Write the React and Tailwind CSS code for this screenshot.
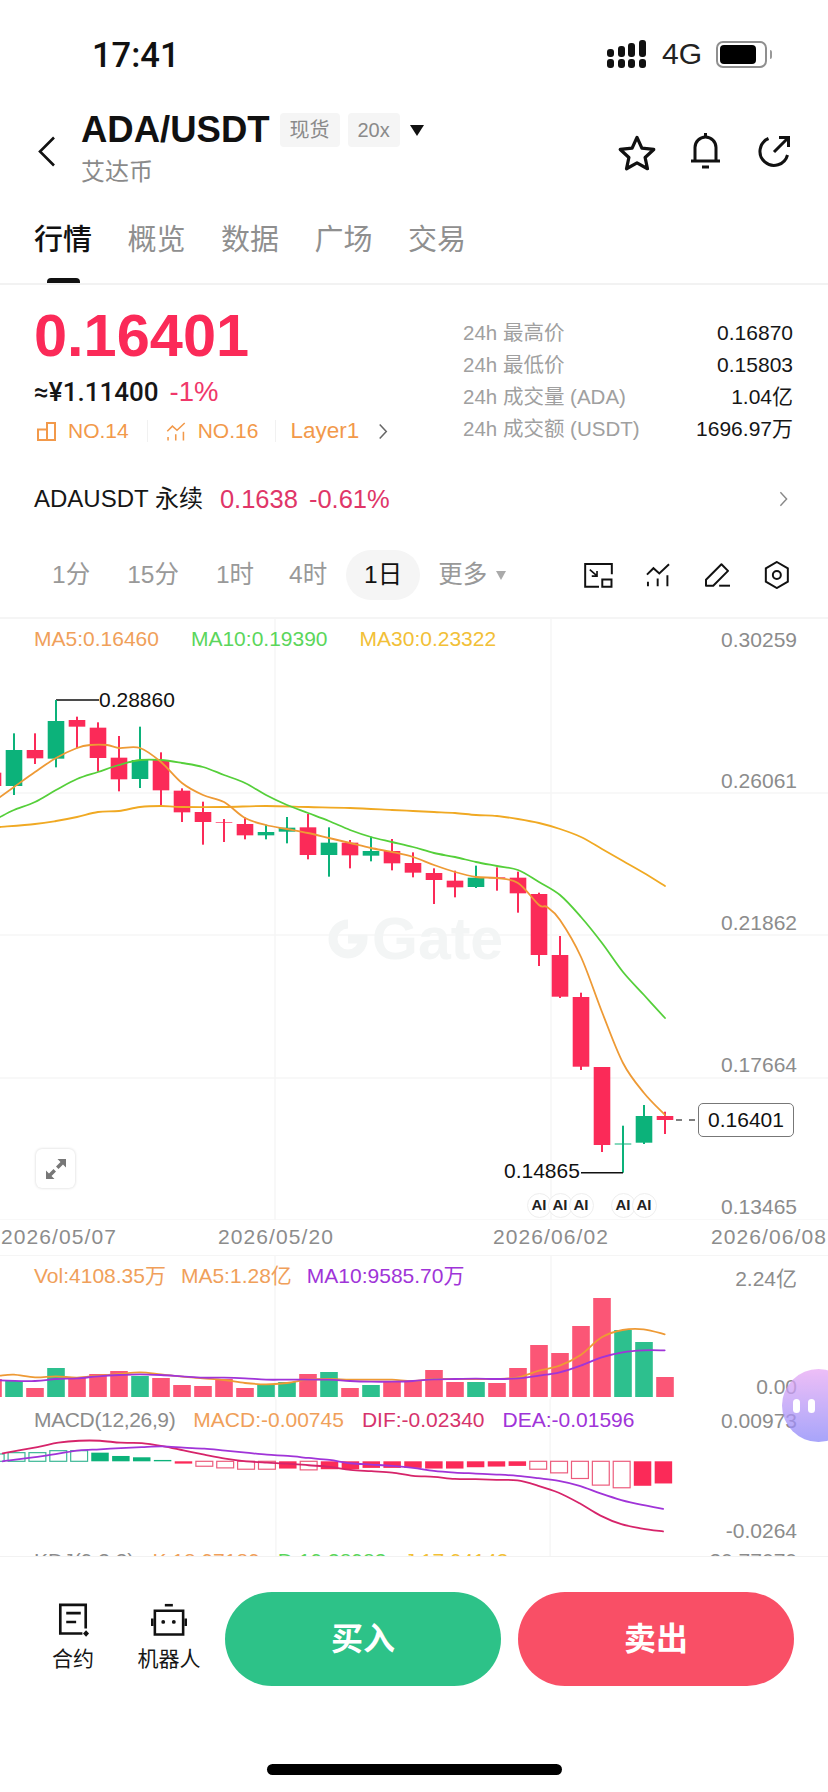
import React from 'react';

const RED = '#fb2a58';
const GREEN = '#0cb27a';
const VOL_RED = '#fb5676';
const VOL_GREEN = '#2dc08e';

// y values read off the chart, in page pixels
const z = (v) => 620 + v / 3;
const candles = [
  [-7, z(430), z(458), z(498), z(510), RED],
  [14, z(340), z(390), z(498), z(525), GREEN],
  [35, z(340), z(390), z(415), z(432), RED],
  [56, z(240), z(303), z(416), z(442), GREEN],
  [77, z(290), z(300), z(320), z(385), RED],
  [98, z(307), z(323), z(414), z(455), RED],
  [119, z(348), z(413), z(478), z(514), RED],
  [140, z(320), z(420), z(477), z(504), GREEN],
  [161, z(397), z(420), z(511), z(558), RED],
  [182, z(505), z(512), z(577), z(606), RED],
  [203, z(545), z(576), z(606), z(674), RED],
  [224, z(597), z(607), z(609), z(666), RED],
  [245, z(592), z(612), z(646), z(658), RED],
  [266, z(614), z(636), z(646), z(658), GREEN],
  [287, z(591), z(623), z(635), z(670), GREEN],
  [308, z(582), z(622), z(705), z(718), RED],
  [329, z(622), z(668), z(705), z(770), GREEN],
  [350, z(660), z(668), z(706), z(745), RED],
  [371, z(650), z(693), z(707), z(724), GREEN],
  [392, z(657), z(693), z(730), z(751), RED],
  [413, z(697), z(729), z(758), z(772), RED],
  [434, z(745), z(759), z(780), z(852), RED],
  [455, z(752), z(782), z(802), z(832), RED],
  [476, z(737), z(773), z(801), z(804), GREEN],
  [497, z(742), z(772), z(775), z(812), RED],
  [518, z(755), z(773), z(820), z(878), RED],
  [539, 892.7, 894, 955, 966, RED],
  [560, 936, 955, 996.7, 998, RED],
  [581, 992.7, 997, 1066.7, 1070, RED],
  [602, 1067, 1067, 1145, 1152, RED],
  [623, 1125.7, 1143.5, 1144.5, 1172.7, GREEN],
  [644, 1105, 1116, 1142.7, 1144, GREEN],
  [665, 1111.7, 1116, 1120, 1134, RED],
];

const ma5 = [[0, 797], [14, 787], [35, 772], [56, 758], [77, 748], [90, 745], [107, 745], [119, 748], [140, 748], [161, 762], [182, 783], [203, 795], [224, 802], [245, 818], [266, 825], [287, 829], [308, 833], [329, 838], [350, 843], [371, 848], [392, 852], [413, 857], [434, 865], [455, 872], [476, 877], [497, 878], [518, 883], [539, 905], [547, 907], [560, 920], [581, 957], [602, 1012], [623, 1063], [644, 1093], [665, 1115]];
const ma10 = [[0, 817], [14, 810], [35, 802], [56, 790], [77, 779], [98, 772], [119, 765], [140, 760], [161, 760], [182, 763], [203, 767], [224, 775], [245, 783], [266, 795], [287, 805], [308, 813], [329, 821], [350, 830], [371, 837], [392, 842], [413, 847], [434, 853], [455, 857], [476, 862], [497, 866], [518, 870], [539, 882], [560, 895], [581, 917], [602, 943], [623, 972], [644, 995], [665, 1018]];
const ma30 = [[0, 827], [35, 824], [56, 821], [77, 817], [98, 812], [119, 811], [140, 807], [161, 806], [182, 807], [224, 807], [266, 806], [308, 807], [350, 808], [392, 810], [413, 811], [434, 812], [455, 813], [476, 815], [497, 816], [518, 819], [539, 823], [560, 829], [581, 837], [602, 849], [623, 861], [644, 873], [665, 886]];

const volBars = [
  [-7, 1380, VOL_RED], [14, 1382, VOL_GREEN], [35, 1389, VOL_RED], [56, 1369, VOL_GREEN], [77, 1379, VOL_RED],
  [98, 1375, VOL_RED], [119, 1372, VOL_RED], [140, 1377, VOL_GREEN], [161, 1379, VOL_RED], [182, 1386, VOL_RED],
  [203, 1387, VOL_RED], [224, 1380, VOL_RED], [245, 1389, VOL_RED], [266, 1386, VOL_GREEN], [287, 1383, VOL_GREEN],
  [308, 1375, VOL_RED], [329, 1373, VOL_GREEN], [350, 1389, VOL_RED], [371, 1386, VOL_GREEN], [392, 1382, VOL_RED],
  [413, 1382, VOL_RED], [434, 1371, VOL_RED], [455, 1383, VOL_RED], [476, 1383, VOL_GREEN], [497, 1384, VOL_RED],
  [518, 1369, VOL_RED], [539, 1346, VOL_RED], [560, 1354, VOL_RED], [581, 1327, VOL_RED], [602, 1299, VOL_RED],
  [623, 1331, VOL_GREEN], [644, 1343, VOL_GREEN], [665, 1378, VOL_RED],
];

const left = (pts) => pts.map(([x, y]) => [x / 3, 1100 + y / 3]);
const right = (pts) => pts.map(([x, y]) => [414 + x / 3, 1230 + y / 3]);

const volMa5 = [...left([[0, 830], [42, 827], [105, 835], [168, 832], [231, 836], [294, 830], [357, 825], [420, 820], [483, 826], [546, 833], [609, 838], [672, 843], [735, 852], [798, 856], [861, 852], [924, 842], [987, 840], [1050, 842], [1113, 842], [1176, 842], [1239, 846]]), ...right([[60, 450], [123, 450], [186, 450], [249, 450], [312, 445], [375, 425], [437, 410], [500, 378], [563, 325], [626, 303], [689, 301], [752, 316]])];
const volMa10 = [...left([[0, 844], [105, 846], [168, 840], [231, 838], [294, 832], [357, 828], [420, 826], [483, 828], [546, 832], [609, 836], [672, 836], [735, 838], [798, 842], [861, 842], [924, 842], [987, 842], [1050, 846], [1113, 848], [1176, 848], [1239, 846]]), ...right([[60, 451], [123, 450], [186, 449], [249, 450], [312, 448], [375, 440], [437, 430], [500, 410], [563, 385], [626, 370], [689, 364], [752, 364]])];
const dif = [...left([[0, 1064], [105, 1045], [168, 1032], [231, 1026], [294, 1026], [357, 1032], [420, 1033], [483, 1042], [546, 1055], [609, 1068], [672, 1080], [735, 1088], [798, 1092], [861, 1095], [924, 1100], [987, 1105], [1050, 1114], [1113, 1118], [1176, 1122], [1239, 1132]]), ...right([[60, 745], [123, 751], [186, 752], [249, 754], [312, 756], [375, 772], [437, 793], [500, 825], [563, 862], [626, 888], [689, 901], [752, 910]])];
const dea = [...left([[0, 1088], [105, 1075], [168, 1065], [231, 1055], [294, 1052], [357, 1048], [420, 1045], [483, 1043], [546, 1047], [609, 1050], [672, 1056], [735, 1062], [798, 1068], [861, 1072], [924, 1078], [987, 1084], [1050, 1094], [1113, 1098], [1176, 1102], [1239, 1108]]), ...right([[60, 727], [123, 732], [186, 735], [249, 738], [312, 742], [375, 749], [437, 757], [500, 772], [563, 795], [626, 815], [689, 830], [752, 842]])];

// [x, end y, hollow]
const MACD_BASE = 1462.7;
const macdBars = [
  [-7, 1100 + 1066 / 3, true], [14, 1100 + 1062 / 3, true], [35, 1100 + 1062 / 3, true], [56, 1100 + 1056 / 3, true], [77, 1100 + 1056 / 3, true],
  [98, 1100 + 1062 / 3, false], [119, 1100 + 1072 / 3, false], [140, 1100 + 1076 / 3, false], [161, 1100 + 1084 / 3, false],
  [182, 1465, false], [203, 1100 + 1103 / 3, true], [224, 1100 + 1108 / 3, true], [245, 1100 + 1112 / 3, true], [266, 1100 + 1112 / 3, true],
  [287, 1100 + 1110 / 3, false], [308, 1100 + 1114 / 3, true], [329, 1100 + 1112 / 3, false], [350, 1100 + 1112 / 3, false],
  [371, 1100 + 1108 / 3, false], [392, 1100 + 1108 / 3, false], [413, 1100 + 1108 / 3, false],
  [434, 1230 + 720 / 3, false], [455, 1230 + 720 / 3, false], [476, 1230 + 716 / 3, false], [497, 1230 + 714 / 3, false], [518, 1230 + 712 / 3, false],
  [539, 1230 + 722 / 3, true], [560, 1230 + 733 / 3, true], [581, 1230 + 750 / 3, true], [602, 1230 + 770 / 3, true], [623, 1230 + 778 / 3, true],
  [644, 1230 + 772 / 3, false], [665, 1230 + 765 / 3, false],
];

// catmull-rom through the points, so the averages read as curves
const smooth = (pts) => {
  let d = `M${pts[0][0]} ${pts[0][1]}`;
  for (let i = 0; i < pts.length - 1; i++) {
    const p0 = pts[i - 1] || pts[i];
    const p1 = pts[i];
    const p2 = pts[i + 1];
    const p3 = pts[i + 2] || p2;
    const c1x = p1[0] + (p2[0] - p0[0]) / 6;
    const c1y = p1[1] + (p2[1] - p0[1]) / 6;
    const c2x = p2[0] - (p3[0] - p1[0]) / 6;
    const c2y = p2[1] - (p3[1] - p1[1]) / 6;
    d += `C${c1x} ${c1y} ${c2x} ${c2y} ${p2[0]} ${p2[1]}`;
  }
  return d;
};

const Line = ({ pts, color }) => (
  <path d={smooth(pts)} fill="none" stroke={color} strokeWidth="1.8" strokeLinecap="round" />
);

const Chevron = ({ className, color = '#777' }) => (
  <svg className={className} viewBox="0 0 10 18" fill="none" stroke={color} strokeWidth="1.6">
    <path d="M1.5 1.5 8.5 9 1.5 16.5" />
  </svg>
);

const TrendIcon = ({ className, color, width = 6 }) => (
  <svg className={className} viewBox="225 36 78 74" fill="none" stroke={color} strokeWidth={width}>
    <path d="M230 72 250 52 268 68 298 40" />
    <path d="M233 94V108M263 84V108M293 74V108" />
  </svg>
);

const AxisLabel = ({ y, children }) => (
  <span className="absolute right-[31px] -translate-y-1/2 text-[21px] leading-none text-[#8c8c8c]" style={{ top: y }}>
    {children}
  </span>
);

const StatRow = ({ label, value }) => (
  <div className="flex h-[32px] items-center justify-between">
    <span className="text-[20.5px] text-[#a0a0a0]">{label}</span>
    <span className="text-[21px] text-[#161616]">{value}</span>
  </div>
);

const App = () => {
  return (
    <div className="w-[828px] h-[1792px] overflow-hidden bg-white font-['Liberation_Sans','Noto_Sans_CJK_SC',sans-serif]">
      {/* status bar */}
      <div className="flex h-[92px] items-start justify-between pl-[92px] pr-[56px] pt-[36px]">
        <span className="font-['Roboto'] text-[34.5px] leading-[38px] font-medium text-[#111]">17:41</span>
        <div className="flex items-center pt-[3px]">
          <svg className="h-[28px] w-[41px]" viewBox="0 0 41 28" fill="#111">
            <rect x="0" y="19" width="7" height="9" rx="3" />
            <rect x="11" y="19" width="7" height="9" rx="3" />
            <rect x="21" y="19" width="7" height="9" rx="3" />
            <rect x="32" y="19" width="7" height="9" rx="3" />
            <rect x="0" y="9" width="7" height="8" rx="3" />
            <rect x="11" y="6" width="7" height="11" rx="3" />
            <rect x="21" y="3" width="7" height="14" rx="3" />
            <rect x="32" y="0" width="7" height="17" rx="3" />
          </svg>
          <span className="ml-[14px] text-[30px] leading-none text-[#222]">4G</span>
          <div className="ml-[14px] flex h-[27px] w-[51px] items-center rounded-[7px] border-2 border-[#8f8f8f] pl-[2px]">
            <div className="h-[19px] w-[36px] rounded-[4px] bg-black" />
          </div>
          <div className="ml-[3px] h-[9px] w-[2px] rounded-r bg-[#999]" />
        </div>
      </div>

      {/* title */}
      <div className="flex h-[104px] items-start pl-[38px] pr-[37px]">
        <svg className="mt-[44px] h-[31px] w-[18px]" viewBox="0 0 18 31" fill="none" stroke="#111" strokeWidth="2.6">
          <path d="M16 1.5 2 15.5 16 29.5" />
        </svg>
        <div className="ml-[25px] mt-[16px]">
          <div className="flex items-center">
            <span className="text-[36.5px] leading-[44px] font-bold text-[#111]">ADA/USDT</span>
            <span className="ml-[10px] flex h-[34px] w-[60px] items-center justify-center rounded bg-[#f5f5f5] text-[20px] text-[#8a8a8a]">现货</span>
            <span className="ml-[8px] flex h-[34px] w-[52px] items-center justify-center rounded bg-[#f5f5f5] text-[20px] text-[#8a8a8a]">20x</span>
            <span className="ml-[10px] h-0 w-0 border-x-[7.5px] border-t-[11px] border-x-transparent border-t-[#111]" />
          </div>
          <div className="mt-[3px] text-[24px] leading-[34px] text-[#8a8a8a]">艾达币</div>
        </div>
        <div className="ml-auto mt-[39px] flex items-start">
          <svg className="mt-[3px] h-[37px] w-[40px]" viewBox="0 0 37 34" fill="none" stroke="#111" strokeWidth="3" strokeLinejoin="round">
            <path d="M18.5 3 23 13 34 14.2 26 21.6 28.2 32 18.5 26.6 8.8 32 11 21.6 3 14.2 14 13Z" />
          </svg>
          <svg className="ml-[33px] mt-[1px] h-[37px] w-[31px]" viewBox="0 0 31 37" fill="none" stroke="#111" strokeWidth="3">
            <path d="M5 29V15.5a10.5 10.5 0 0 1 21 0V29" />
            <path d="M1 29H30" />
            <path d="M12 35H19M15.5 1V5" />
          </svg>
          <svg className="ml-[36px] mt-[4px] h-[33px] w-[34px]" viewBox="0 0 34 33" fill="none" stroke="#111" strokeWidth="3">
            <path d="M11.5 3.5A14 14 0 1 0 30.5 20" />
            <path d="M17 17 31 3M22 2.5H31.5V12" />
          </svg>
        </div>
      </div>

      {/* tabs */}
      <div className="relative flex h-[89px] gap-[35.5px] border-b-2 border-[#f2f2f2] pl-[34px] pt-[26px] text-[29px] leading-[36px] text-[#8f8f8f]">
        <span className="font-medium text-[#111]">行情</span>
        <span>概览</span>
        <span>数据</span>
        <span>广场</span>
        <span>交易</span>
        <div className="absolute bottom-0 left-[47px] h-[5px] w-[33px] rounded-t-sm bg-[#111]" />
      </div>

      {/* price block */}
      <div className="flex h-[175px] pl-[34px] pr-[35px]">
        <div className="w-[429px]">
          <div className="mt-[21px] text-[59.5px] leading-[60px] font-bold text-[#fb2a58]">0.16401</div>
          <div className="mt-[11px] flex items-center text-[26px] leading-[30px]">
            <span className="font-['Roboto'] font-medium text-[#161616]">≈¥1.11400</span>
            <span className="ml-[11px] text-[27.5px] text-[#f0386a]">-1%</span>
          </div>
          <div className="mt-[8px] flex h-[32px] items-center text-[21px] text-[#f2994a]">
            <svg className="ml-[3px] h-[19px] w-[19px]" viewBox="0 0 19 19" fill="none" stroke="#f2994a" strokeWidth="2">
              <path d="M1 7.5H10V18H1ZM10 1H18V18H10Z" />
            </svg>
            <span className="ml-[12px]">NO.14</span>
            <div className="ml-[18px] h-[22px] w-px bg-[#f1f1f1]" />
            <TrendIcon className="ml-[18px] h-[19px] w-[20px]" color="#f2994a" width={6} />
            <span className="ml-[12px]">NO.16</span>
            <div className="ml-[17px] h-[22px] w-px bg-[#f1f1f1]" />
            <span className="ml-[14px] text-[22.5px]">Layer1</span>
            <Chevron className="ml-[19px] h-[17px] w-[10px]" color="#666" />
          </div>
        </div>
        <div className="flex-1 pt-[32px]">
          <StatRow label="24h 最高价" value="0.16870" />
          <StatRow label="24h 最低价" value="0.15803" />
          <StatRow label="24h 成交量 (ADA)" value="1.04亿" />
          <StatRow label="24h 成交额 (USDT)" value="1696.97万" />
        </div>
      </div>

      {/* perpetual row */}
      <div className="flex h-[78px] items-center pl-[34px] pr-[40px] text-[24px]">
        <span className="text-[#161616]">ADAUSDT 永续</span>
        <span className="ml-[17px] text-[25.5px] text-[#e03668]">0.1638</span>
        <span className="ml-[11px] text-[25.5px] text-[#e03668]">-0.61%</span>
        <Chevron className="ml-auto h-[16px] w-[9px]" color="#888" />
      </div>

      {/* interval row */}
      <div className="flex h-[79px] items-start pt-[12px] text-[24.5px] text-[#999]">
        <span className="ml-[52px] leading-[50px]">1分</span>
        <span className="ml-[37px] leading-[50px]">15分</span>
        <span className="ml-[37px] leading-[50px]">1时</span>
        <span className="ml-[35px] leading-[50px]">4时</span>
        <span className="ml-[19px] flex h-[50px] w-[74px] items-center justify-center rounded-full bg-[#f5f5f5] text-[#111]">1日</span>
        <span className="ml-[18px] leading-[50px]">更多</span>
        <span className="ml-[9px] mt-[21px] h-0 w-0 border-x-[5.5px] border-t-[9px] border-x-transparent border-t-[#aaa]" />
        <svg className="ml-[78px] mt-[13px] h-[25px] w-[29px]" viewBox="43 36 87 76" fill="none" stroke="#111" strokeWidth="6">
          <path d="M127 70V39H46V108H88" />
          <path d="M98 86H126V108H98Z" />
          <path d="M60 56 82 75M82 60V76H66" strokeWidth="5" />
        </svg>
        <TrendIcon className="ml-[32px] mt-[13px] h-[24px] w-[26px]" color="#111" />
        <svg className="ml-[33px] mt-[13px] h-[24px] w-[27px]" viewBox="403 34 80 73" fill="none" stroke="#111" strokeWidth="6" strokeLinejoin="round">
          <path d="M408 85 455 38 475 58 430 103H408Z" />
          <path d="M448 103H481" />
        </svg>
        <svg className="ml-[33px] mt-[11px] h-[28px] w-[26px]" viewBox="585 33 75 84" fill="none" stroke="#111" strokeWidth="6">
          <path d="M622 36 655 55V95L622 114 589 95V55Z" />
          <circle cx="622" cy="75" r="12" />
        </svg>
      </div>

      {/* main chart */}
      <div className="relative h-[603px] border-t-2 border-[#f5f5f5]">
        <svg className="absolute inset-0 h-full w-full" viewBox="0 619 828 601">
          <path d="M0 793H828M0 935H828M0 1078H828M0 1220H828M275 619V1220M551 619V1220" stroke="#f6f6f6" strokeWidth="1.5" fill="none" />
          {candles.map(([x, hi, top, bot, lo, c]) => (
            <g key={x}>
              <rect x={x - 1} y={hi} width="2" height={lo - hi} fill={c} />
              <rect x={x - 8.3} y={top} width="16.6" height={bot - top} fill={c} />
            </g>
          ))}
          <Line pts={ma30} color="#f0a923" />
          <Line pts={ma10} color="#55cf3a" />
          <Line pts={ma5} color="#ee9a35" />
          <path d="M56 700H99M623 1172.7H581" stroke="#111" strokeWidth="1.6" fill="none" />
          <path d="M56 700V720" stroke={GREEN} strokeWidth="2" fill="none" />
          <path d="M676 1120H697" stroke="#555" strokeWidth="1.5" strokeDasharray="6 7" fill="none" />
        </svg>

        <div className="relative flex h-[40px] items-center gap-[32px] pl-[34px] text-[21px]">
          <span className="text-[#f0a05a]">MA5:0.16460</span>
          <span className="text-[#5bd65b]">MA10:0.19390</span>
          <span className="text-[#f2c037]">MA30:0.23322</span>
        </div>

        <AxisLabel y={20}>0.30259</AxisLabel>
        <AxisLabel y={161}>0.26061</AxisLabel>
        <AxisLabel y={303}>0.21862</AxisLabel>
        <AxisLabel y={445}>0.17664</AxisLabel>
        <AxisLabel y={587}>0.13465</AxisLabel>

        {/* watermark */}
        <div className="absolute left-[328px] top-[296px] flex items-center">
          <svg className="h-[40px] w-[40px]" viewBox="0 0 40 40" fill="none" stroke="#f3f5f5" strokeWidth="9">
            <path d="M20 5A15 15 0 1 0 35 20H20" />
          </svg>
          <span className="ml-[4px] text-[59px] leading-[48px] font-bold text-[#f3f5f5]">Gate</span>
        </div>

        <span className="absolute left-[99px] top-[69px] text-[21px] leading-[24px] text-[#111]">0.28860</span>
        <span className="absolute left-[504px] top-[540px] text-[21px] leading-[24px] text-[#111]">0.14865</span>
        <span className="absolute left-[698px] top-[484px] flex h-[34px] w-[96px] items-center justify-center rounded-[5px] border border-[#777] bg-white text-[21px] text-[#111]">0.16401</span>

        {[539, 560, 581, 623, 644].map((x) => (
          <span
            key={x}
            className="absolute top-[574px] flex h-[25px] w-[25px] items-center justify-center rounded-full border border-[#eee] bg-white text-[15px] font-bold text-[#222]"
            style={{ left: x - 12.5 }}
          >
            AI
          </span>
        ))}

        <div className="absolute left-[36px] top-[530px] flex h-[39px] w-[39px] items-center justify-center rounded-[6px] bg-white shadow-[0_0_3px_rgba(0,0,0,0.18)]">
          <svg className="h-[20px] w-[20px]" viewBox="0 0 20 20" fill="#777">
            <path d="M11.5 0H20V8.5L17 5.5 12.5 10 10 7.5 14.5 3ZM8.5 20H0V11.5L3 14.5 7.5 10 10 12.5 5.5 17Z" />
          </svg>
        </div>
      </div>

      {/* date axis */}
      <div className="relative h-[36px] overflow-hidden border-b border-[#f5f5f5] text-[21px] leading-[34px] tracking-[1.1px] text-[#8c8c8c]">
        <span className="absolute left-[1px]">2026/05/07</span>
        <span className="absolute left-[218px]">2026/05/20</span>
        <span className="absolute left-[493px]">2026/06/02</span>
        <span className="absolute left-[711px] whitespace-nowrap">2026/06/08</span>
      </div>

      {/* volume */}
      <div className="relative h-[143px]">
        <svg className="absolute inset-0 h-full w-full" viewBox="0 1257 828 143">
          <path d="M275 1257V1400M551 1257V1400" stroke="#f6f6f6" strokeWidth="1.5" fill="none" />
          {volBars.map(([x, top, c]) => (
            <rect key={x} x={x - 8.8} y={top} width="17.6" height={1398 - top} fill={c} />
          ))}
          <Line pts={volMa5} color="#ee9a35" />
          <Line pts={volMa10} color="#a034d8" />
        </svg>
        <div className="relative flex h-[40px] items-center gap-[15px] pl-[34px] text-[21px]">
          <span className="text-[#f0a05a]">Vol:4108.35万</span>
          <span className="text-[#f0a05a]">MA5:1.28亿</span>
          <span className="text-[#a034d8]">MA10:9585.70万</span>
        </div>
        <AxisLabel y={22}>2.24亿</AxisLabel>
        <AxisLabel y={130}>0.00</AxisLabel>
      </div>

      {/* macd, the next panel is cut by the bottom bar */}
      <div className="relative h-[158px] overflow-hidden border-b border-[#f2f2f2]">
        <svg className="absolute inset-0 h-full w-full" viewBox="0 1400 828 158">
          <path d="M275 1400V1558M551 1400V1558" stroke="#f6f6f6" strokeWidth="1.5" fill="none" />
          {macdBars.map(([x, end, hollow]) => {
            const top = Math.min(end, MACD_BASE);
            const h = Math.abs(end - MACD_BASE);
            const c = end < MACD_BASE ? GREEN : RED;
            return hollow ? (
              <rect key={x} x={x - 8.5} y={top} width="17" height={h} fill="#fff" stroke={c === RED ? '#ec5c7c' : '#3bb795'} strokeWidth="1.2" />
            ) : (
              <rect key={x} x={x - 8.8} y={top} width="17.6" height={h} fill={c} />
            );
          })}
          <Line pts={dif} color="#d6246a" />
          <Line pts={dea} color="#a034d8" />
        </svg>
        <div className="relative flex h-[42px] items-center gap-[18px] pl-[34px] text-[21px]">
          <span className="tracking-[-0.35px] text-[#8c8c8c]">MACD(12,26,9)</span>
          <span className="text-[#f0a05a]">MACD:-0.00745</span>
          <span className="text-[#d6336c]">DIF:-0.02340</span>
          <span className="text-[#a034d8]">DEA:-0.01596</span>
        </div>
        <AxisLabel y={21}>0.00973</AxisLabel>
        <AxisLabel y={131}>-0.0264</AxisLabel>
        <div className="relative mt-[108px] flex h-[24px] items-center gap-[18px] pl-[34px] text-[21px] whitespace-nowrap">
          <span className="text-[#8c8c8c]">KDJ(9,3,3)</span>
          <span className="text-[#f0a05a]">K:18.97189</span>
          <span className="text-[#5bd65b]">D:19.38983</span>
          <span className="text-[#f2c037]">J:17.94143</span>
          <span className="absolute right-[31px] text-[#8c8c8c]">30.77070</span>
        </div>
      </div>

      {/* bottom bar */}
      <div className="relative h-[234px] bg-white">
        <div className="flex items-start pl-[34px] pr-[34px] pt-[35px]">
          <div className="flex w-[78px] flex-col items-center pt-[10px]">
            <svg className="h-[35px] w-[33px]" viewBox="50 25 100 105" fill="#111">
              <path d="M127 120H60V33H137V105" fill="none" stroke="#111" strokeWidth="8" />
              <path d="M78 58H122M78 85H108" fill="none" stroke="#111" strokeWidth="8" />
              <path d="M138 110 147 120 138 130 129 120Z" />
            </svg>
            <span className="mt-[6px] text-[21px] leading-[32px] text-[#161616]">合约</span>
          </div>
          <div className="ml-[25px] flex w-[64px] flex-col items-center pt-[10px]">
            <svg className="h-[35px] w-[36px]" viewBox="332 25 112 105" fill="none" stroke="#111" strokeWidth="8">
              <path d="M375 33H400" />
              <path d="M344 50H432V124H344Z" />
              <path d="M336 74V98M440 74V98" />
              <circle cx="370" cy="85" r="6" fill="#111" stroke="none" />
              <circle cx="403" cy="85" r="6" fill="#111" stroke="none" />
            </svg>
            <span className="mt-[6px] whitespace-nowrap text-[21px] leading-[32px] text-[#161616]">机器人</span>
          </div>
          <div className="ml-[24px] flex h-[94px] w-[276px] items-center justify-center rounded-full bg-[#2dc288] text-[32px] font-bold text-white">买入</div>
          <div className="ml-[17px] flex h-[94px] w-[276px] items-center justify-center rounded-full bg-[#f94f66] text-[32px] font-bold text-white">卖出</div>
        </div>
        <div className="mx-auto mt-[78px] h-[11px] w-[295px] rounded-full bg-black" />
      </div>

      {/* floating assistant */}
      <div className="fixed left-[782px] top-[1369px] flex h-[73px] w-[73px] items-center gap-[8px] rounded-full bg-gradient-to-b from-[#e8a8f4] to-[#8a86f8] pl-[11px] opacity-75">
        <div className="h-[14px] w-[7px] rounded-full bg-white" />
        <div className="h-[14px] w-[7px] rounded-full bg-white" />
      </div>
    </div>
  );
};

export default App;
